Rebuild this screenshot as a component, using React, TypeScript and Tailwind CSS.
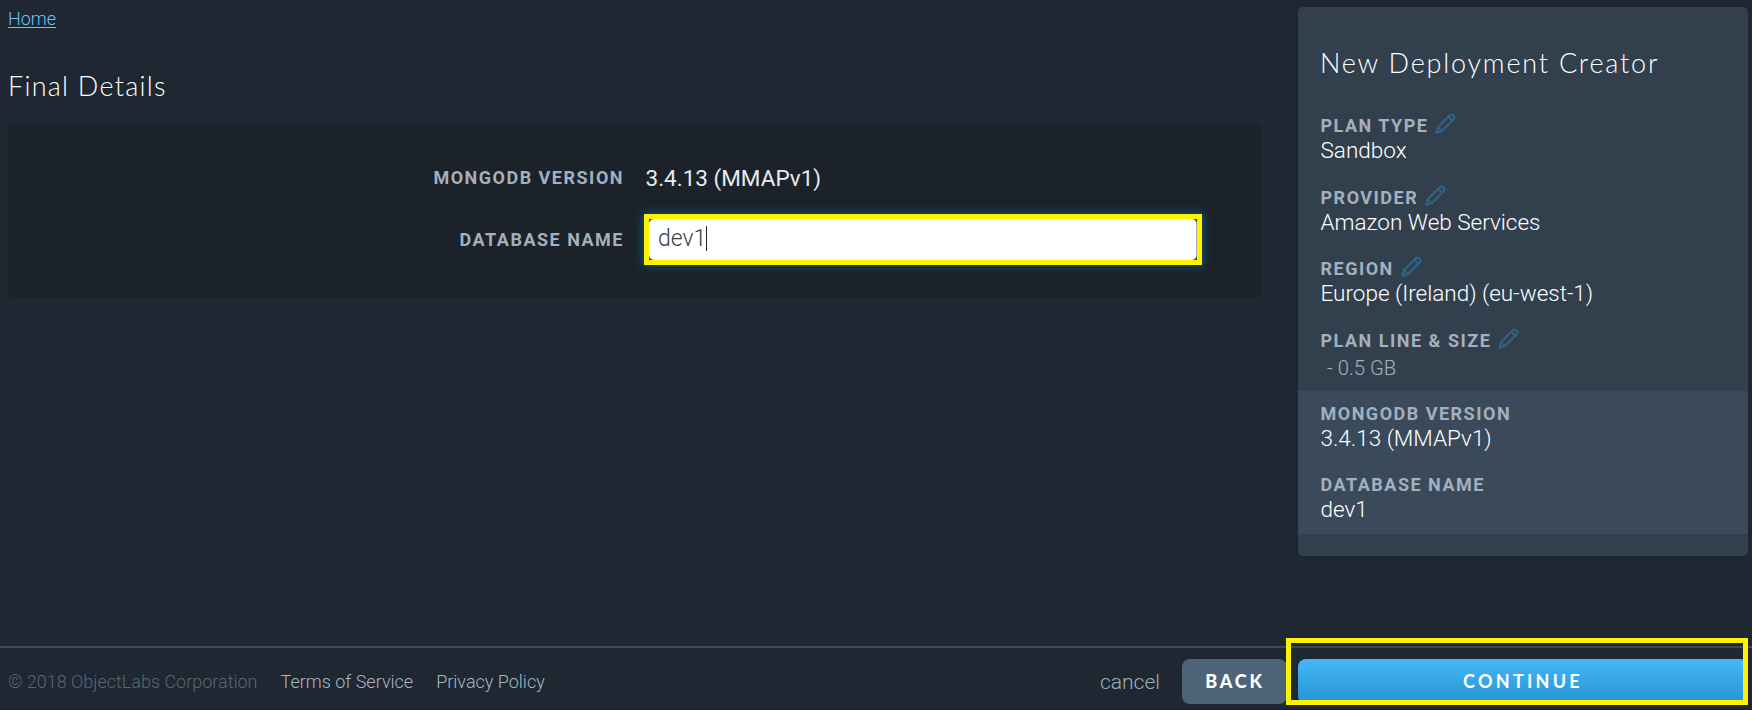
function PencilIcon() {
  return (
    <svg
      className="ml-[7px] -mt-[5px] h-[21px] w-[21px] shrink-0 text-[#2f6385]"
      viewBox="0 0 21 21"
      fill="none"
      stroke="currentColor"
      strokeWidth="2.1"
      strokeLinejoin="round"
      strokeLinecap="round"
    >
      <path d="M1.3 19.7 L2.8 14.2 L14.9 2.1 Q16.4 0.9 17.7 2.1 L18.9 3.3 Q20.1 4.6 18.9 6.1 L6.8 18.2 Z" />
      <path d="M14 4.4 L16.6 7" />
      <path d="M3.6 14.8 L6.2 17.4" strokeWidth="1.6" />
    </svg>
  );
}

const labelClass =
  "font-['Roboto',sans-serif] text-[18px] leading-[24px] font-bold tracking-[1.5px] whitespace-nowrap text-[#a3b0be]";

function SummaryItem({ label, value, editable }: { label: string; value: string; editable?: boolean }) {
  return (
    <div className="pl-[22.5px]">
      <div className="flex h-[24px] items-center">
        <span className={labelClass}>{label}</span>
        {editable && <PencilIcon />}
      </div>
      <div className="text-[22.5px] leading-[25px] text-white">{value}</div>
    </div>
  );
}

export default function App() {
  return (
    <div className="flex h-[710px] w-[1752px] flex-col overflow-hidden border-b border-[#191d29] bg-[#1e2732] font-['Roboto',sans-serif] font-light">
      <div className="flex h-[646px] pl-2">
        <main className="w-[1253px] pt-[7px]">
          <a
            href="#"
            className="block w-fit text-[18px] leading-[24px] text-[#6ac6f7] underline decoration-1 underline-offset-[2px]"
          >
            Home
          </a>
          <h1 className="mt-[37px] font-['Lato',sans-serif] text-[27px] leading-[36px] font-light tracking-[1.25px] text-white">
            Final Details
          </h1>
          <section className="mt-[21px] h-[173px] rounded-[5px] bg-[#1b222a] pt-[40px]">
            <div className="flex h-[49px]">
              <div className={`${labelClass} w-[616px] pt-px text-right`}>MONGODB VERSION</div>
              <div className="ml-[21.5px] text-[22.5px] leading-[26px] font-normal text-[#e8ebee]">3.4.13 (MMAPv1)</div>
            </div>
            <div className="flex">
              <div className={`${labelClass} w-[616px] pt-[14px] text-right`}>DATABASE NAME</div>
              <div className="ml-[20px] h-[51px] w-[558px] border-5 border-[#fff200] bg-[#1d4a6b] shadow-[0_0_9px_1px_#17527a]">
                <div className="flex h-full items-start rounded-[5px] border-r border-[#a9a9a9] bg-white pt-[7px] pl-[9px]">
                  <span className="text-[23px] leading-[26px] text-[#333f4a]">dev1</span>
                  <span className="h-[25px] w-px bg-[#222b33]" />
                </div>
              </div>
            </div>
          </section>
        </main>

        <aside className="mt-[7px] ml-[37px] h-[549px] w-[450px] overflow-hidden rounded-[5px] bg-[#32404e] pt-[38px]">
          <h2 className="pl-[22px] font-['Lato',sans-serif] text-[27px] leading-[36px] font-light tracking-[1.8px] whitespace-nowrap text-white">
            New Deployment Creator
          </h2>
          <div className="flex h-[310px] flex-col gap-[22.5px] pt-[33px]">
            <SummaryItem label="PLAN TYPE" value="Sandbox" editable />
            <SummaryItem label="PROVIDER" value="Amazon Web Services" editable />
            <SummaryItem label="REGION" value="Europe (Ireland) (eu-west-1)" editable />
            <div className="pl-[22.5px]">
              <div className="flex h-[24px] items-center">
                <span className={labelClass}>PLAN LINE &amp; SIZE</span>
                <PencilIcon />
              </div>
              <div className="pl-[6.5px] text-[20.25px] leading-[31px] text-[#a3b0be]">- 0.5 GB</div>
            </div>
          </div>
          <div className="flex h-[143px] flex-col gap-[22px] bg-[#3a4a5a] pt-[11px]">
            <SummaryItem label="MONGODB VERSION" value="3.4.13 (MMAPv1)" />
            <SummaryItem label="DATABASE NAME" value="dev1" />
          </div>
        </aside>
      </div>

      <footer className="flex h-[63px] items-start border-t-2 border-[#3e4954] pt-[11px] pl-2">
        <div className="flex gap-[23px] pt-[11px] text-[18px] leading-[24px] whitespace-nowrap text-[#a9b7c5]">
          <span className="text-[#5b6672]">© 2018 ObjectLabs Corporation</span>
          <span>Terms of Service</span>
          <span>Privacy Policy</span>
        </div>
        <div className="ml-auto pt-[10px] text-[21px] leading-[26px] text-[#a3adb8]">cancel</div>
        <button className="ml-[22px] h-[45px] w-[105px] rounded-[8px] bg-[#4d6377] pb-px pl-px font-['Lato',sans-serif] text-[18px] font-black tracking-[2.8px] text-white">
          BACK
        </button>
        <div className="relative mr-[4px] ml-[11px]">
          <button className="h-[45px] w-[450px] rounded-[8px] bg-linear-to-b from-[#46b6f6] to-[#2594d3] pb-px font-['Lato',sans-serif] text-[18px] font-bold tracking-[3.25px] text-white">
            CONTINUE
          </button>
          <div className="pointer-events-none absolute -top-[21px] -left-[12px] h-[67px] w-[462px] border-5 border-[#fff200]" />
        </div>
      </footer>
    </div>
  );
}
